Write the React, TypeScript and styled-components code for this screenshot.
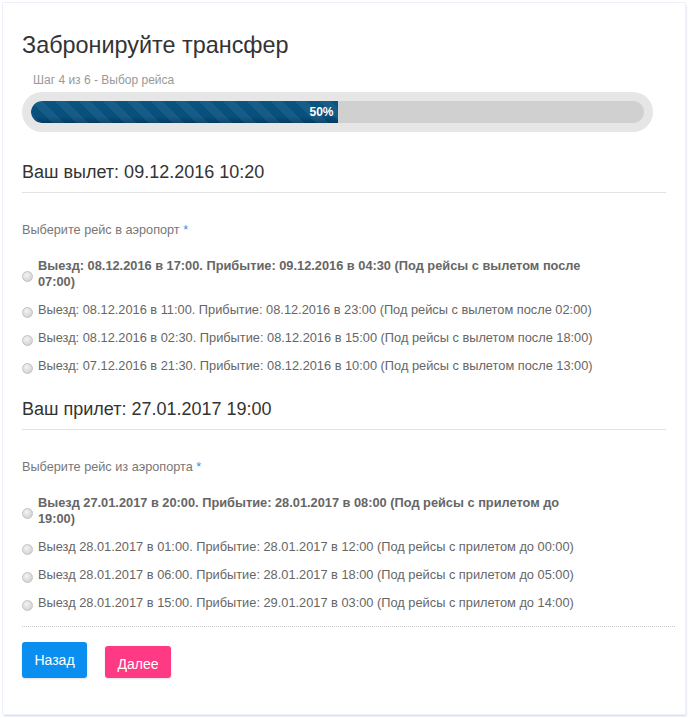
import React from "react";
import styled, { createGlobalStyle } from "styled-components";

const GlobalStyle = createGlobalStyle`
  html, body { margin: 0; padding: 0; background: #fff; }
  body { font-family: "Liberation Sans", Arial, sans-serif; }
`;

const Card = styled.div`
  box-sizing: border-box;
  margin: 3px;
  width: 682px;
  height: 711px;
  background: #fff;
  padding: 28px 10px 0 19px;
  box-shadow: 0 0 0 1px #eef0fb, 1px 2px 2px rgba(90, 120, 230, 0.35);
`;

const Title = styled.h1`
  margin: 0;
  font-size: 23.4px;
  line-height: 28px;
  font-weight: normal;
  color: #333;
`;

const StepText = styled.div`
  margin-top: 13px;
  padding-left: 11px;
  font-size: 12px;
  line-height: 16px;
  color: #999;
`;

const ProgressOuter = styled.div`
  box-sizing: border-box;
  margin-top: 4px;
  width: 631px;
  height: 40px;
  padding: 9px;
  border-radius: 20px;
  background: #e6e6e6;
`;

const ProgressTrack = styled.div`
  height: 22px;
  border-radius: 11px;
  background: #d0d0d0;
  display: flex;
  overflow: hidden;
`;

const ProgressFill = styled.div`
  height: 100%;
  border-radius: 11px 0 0 11px;
  display: flex;
  align-items: center;
  justify-content: flex-end;
  padding-right: 4px;
  box-sizing: border-box;
  color: #fff;
  font-size: 12px;
  font-weight: bold;
  background-image:
    linear-gradient(45deg, rgba(255,255,255,0.06) 25%, transparent 25%, transparent 50%, rgba(255,255,255,0.06) 50%, rgba(255,255,255,0.06) 75%, transparent 75%, transparent),
    linear-gradient(to bottom, #0a5482 0%, #07507e 70%, #043b5f 100%);
  background-size: 24px 24px, 100% 100%;
`;

const SectionHeading = styled.h2<{ $top: number }>`
  margin: ${(p) => p.$top}px 0 0;
  font-size: 18px;
  line-height: 22px;
  font-weight: normal;
  color: #333;
`;

const Rule = styled.hr`
  margin: 9px 9px 0 0;
  border: 0;
  border-top: 1px solid #e3e3e3;
  height: 0;
`;

const FieldLabel = styled.div`
  margin-top: 29px;
  font-size: 12.7px;
  line-height: 16px;
  color: #777;
`;

const Required = styled.span`
  color: #3b8fe0;
`;

const OptionList = styled.div`
  margin-top: 20px;
  display: flex;
  flex-direction: column;
  gap: 12px;
`;

const OptionRow = styled.label`
  display: flex;
  align-items: center;
  gap: 5px;
`;

const Radio = styled.input`
  appearance: none;
  -webkit-appearance: none;
  flex: none;
  margin: 4px 0 0;
  width: 11px;
  height: 11px;
  border-radius: 50%;
  border: 1px solid #c4c4c4;
  box-sizing: border-box;
  background: radial-gradient(circle at 40% 35%, #f4f4f4 0%, #dcdcdc 55%, #c8c8c8 100%);
`;

const OptionText = styled.span<{ $bold?: boolean }>`
  max-width: 560px;
  font-size: 12.8px;
  line-height: 16px;
  color: #666;
  font-weight: ${(p) => (p.$bold ? "bold" : "normal")};
`;

const Dotted = styled.div`
  margin-top: 15px;
  border-top: 1px dotted #c8c8c8;
`;

const Buttons = styled.div`
  margin-top: 15px;
  display: flex;
  align-items: flex-end;
  gap: 18px;
`;

const Button = styled.button<{ $color: string; $h: number; $w: number; $pt: number }>`
  box-sizing: border-box;
  width: ${(p) => p.$w}px;
  height: ${(p) => p.$h}px;
  border: 0;
  border-radius: 3px;
  background: ${(p) => p.$color};
  color: #fff;
  font-family: "Liberation Sans", Arial, sans-serif;
  font-size: 14px;
  padding: ${(p) => p.$pt}px 0 0;
  display: flex;
  justify-content: center;
  align-items: flex-start;
  box-shadow: 0 1px 2px rgba(0, 0, 0, 0.12);
`;

type Section = {
  heading: string;
  top: number;
  label: string;
  name: string;
  options: { text: string; bold?: boolean }[];
};

const sections: Section[] = [
  {
    heading: "Ваш вылет: 09.12.2016 10:20",
    top: 29,
    label: "Выберите рейс в аэропорт",
    name: "to",
    options: [
      { text: "Выезд: 08.12.2016 в 17:00. Прибытие: 09.12.2016 в 04:30 (Под рейсы с вылетом после 07:00)", bold: true },
      { text: "Выезд: 08.12.2016 в 11:00. Прибытие: 08.12.2016 в 23:00 (Под рейсы с вылетом после 02:00)" },
      { text: "Выезд: 08.12.2016 в 02:30. Прибытие: 08.12.2016 в 15:00 (Под рейсы с вылетом после 18:00)" },
      { text: "Выезд: 07.12.2016 в 21:30. Прибытие: 08.12.2016 в 10:00 (Под рейсы с вылетом после 13:00)" },
    ],
  },
  {
    heading: "Ваш прилет: 27.01.2017 19:00",
    top: 24,
    label: "Выберите рейс из аэропорта",
    name: "from",
    options: [
      { text: "Выезд 27.01.2017 в 20:00. Прибытие: 28.01.2017 в 08:00 (Под рейсы с прилетом до 19:00)", bold: true },
      { text: "Выезд 28.01.2017 в 01:00. Прибытие: 28.01.2017 в 12:00 (Под рейсы с прилетом до 00:00)" },
      { text: "Выезд 28.01.2017 в 06:00. Прибытие: 28.01.2017 в 18:00 (Под рейсы с прилетом до 05:00)" },
      { text: "Выезд 28.01.2017 в 15:00. Прибытие: 29.01.2017 в 03:00 (Под рейсы с прилетом до 14:00)" },
    ],
  },
];

export default function App() {
  const progress = 50;
  return (
    <>
      <GlobalStyle />
      <Card>
        <Title>Забронируйте трансфер</Title>
        <StepText>Шаг 4 из 6 - Выбор рейса</StepText>
        <ProgressOuter>
          <ProgressTrack>
            <ProgressFill style={{ width: `${progress}%` }}>{progress}%</ProgressFill>
          </ProgressTrack>
        </ProgressOuter>
        {sections.map((s) => (
          <React.Fragment key={s.name}>
            <SectionHeading $top={s.top}>{s.heading}</SectionHeading>
            <Rule />
            <FieldLabel>
              {s.label} <Required>*</Required>
            </FieldLabel>
            <OptionList>
              {s.options.map((o, i) => (
                <OptionRow key={i}>
                  <Radio type="radio" name={s.name} />
                  <OptionText $bold={o.bold}>{o.text}</OptionText>
                </OptionRow>
              ))}
            </OptionList>
          </React.Fragment>
        ))}
        <Dotted />
        <Buttons>
          <Button $color="#0a8ff0" $h={36} $w={65} $pt={10}>Назад</Button>
          <Button $color="#ff3a84" $h={32} $w={66} $pt={10}>Далее</Button>
        </Buttons>
      </Card>
    </>
  );
}
